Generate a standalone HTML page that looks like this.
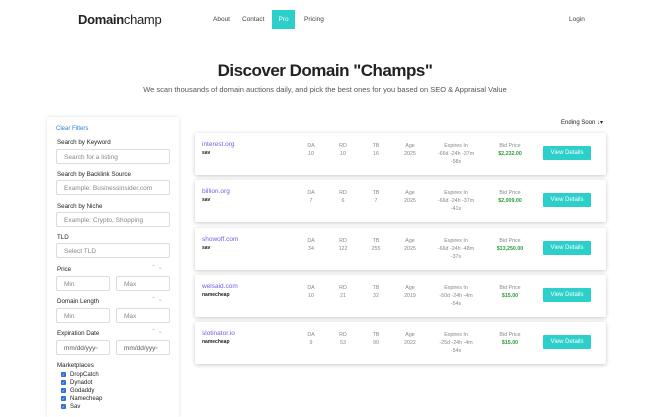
<!DOCTYPE html><html><head><style>
*{box-sizing:border-box;margin:0;padding:0}
body{width:650px;height:414px;overflow:hidden;background:#fff;font-family:"Liberation Sans",sans-serif;color:#222;position:relative}
.a{position:absolute}
.nav{font-size:6.5px;color:#444}
.inp{position:absolute;left:56px;width:114px;height:15px;border:1px solid #dcdcdc;border-radius:2px;font-size:6.5px;color:#888;padding:4px 0 0 7px}
.lbl{position:absolute;left:57px;font-size:6.2px;color:#222}
.half{width:54px}
.card{position:absolute;left:195px;width:411px;height:42px;background:#fff;box-shadow:0 1px 4px rgba(0,0,0,.22);border-radius:2px}
.c{position:absolute;text-align:center;font-size:5.3px;color:#888;line-height:8px}
.btn{position:absolute;left:348px;top:13px;width:48px;height:14px;background:#2ccfc9;color:#fff;font-size:6px;text-align:center;line-height:14px;border-radius:1px}
.cb{font-size:6px;color:#222;position:absolute;left:61px}
.cb:before{content:"✓";display:inline-block;width:5px;height:5px;background:#2f6fd6;color:#fff;font-size:4px;line-height:5px;text-align:center;margin-right:4px;border-radius:1px;vertical-align:middle}
</style></head><body>
<div class="a" style="left:78px;top:12px;font-size:13px;letter-spacing:-0.3px"><b>Domain</b>champ</div>
<div class="a nav" style="left:213px;top:16px">About</div>
<div class="a nav" style="left:242px;top:16px">Contact</div>
<div class="a" style="left:272px;top:10px;width:23px;height:19px;background:#2ccfc9;color:#fff;font-size:6.5px;text-align:center;line-height:19px">Pro</div>
<div class="a nav" style="left:304px;top:16px">Pricing</div>
<div class="a nav" style="left:569px;top:16px">Login</div>
<div class="a" style="left:0;width:650px;top:61px;text-align:center;font-size:17px;font-weight:bold;letter-spacing:-0.5px">Discover Domain "Champs"</div>
<div class="a" style="left:0;width:650px;top:85px;text-align:center;font-size:7.5px;color:#555">We scan thousands of domain auctions daily, and pick the best ones for you based on SEO &amp; Appraisal Value</div>

<div class="a" style="left:47px;top:117px;width:132px;height:300px;box-shadow:0 0 4px rgba(0,0,0,.12);border-radius:2px"></div>
<div class="a" style="left:56px;top:126px;font-size:6px;color:#2f7de0">Clear Filters</div>
<div class="lbl" style="top:139px">Search by Keyword</div><div class="inp" style="top:149px">Search for a listing</div>
<div class="lbl" style="top:171px">Search by Backlink Source</div><div class="inp" style="top:180px">Example: Businessinsider.com</div>
<div class="lbl" style="top:203px">Search by Niche</div><div class="inp" style="top:212px">Example: Crypto, Shopping</div>
<div class="lbl" style="top:234px">TLD</div><div class="inp" style="top:243px">Select TLD</div>
<div class="lbl" style="top:266px">Price</div><div class="a" style="left:151px;top:264px;font-size:6px;color:#bbb">⌃ ⌄</div>
<div class="inp half" style="top:276px">Min</div><div class="inp half" style="top:276px;left:116px">Max</div>
<div class="lbl" style="top:298px">Domain Length</div><div class="a" style="left:151px;top:296px;font-size:6px;color:#bbb">⌃ ⌄</div>
<div class="inp half" style="top:308px">Min</div><div class="inp half" style="top:308px;left:116px">Max</div>
<div class="lbl" style="top:330px">Expiration Date</div><div class="a" style="left:151px;top:328px;font-size:6px;color:#bbb">⌃ ⌄</div>
<div class="inp half" style="top:340px;color:#555">mm/dd/yyy▫</div><div class="inp half" style="top:340px;left:116px;color:#555">mm/dd/yyy▫</div>
<div class="lbl" style="top:362px">Marketplaces</div>
<div class="cb" style="top:372px">DropCatch</div><div class="cb" style="top:380px">Dynadot</div><div class="cb" style="top:388px">Godaddy</div><div class="cb" style="top:396px">Namecheap</div><div class="cb" style="top:404px">Sav</div>

<div class="a" style="left:561px;top:119px;font-size:6px;color:#222">Ending Soon ↓▾</div>

<div class="card" style="top:133px"><div class="a" style="left:7px;top:8px;font-size:6.5px;color:#7a5be8">interest.org</div><div class="a" style="left:7px;top:17px;font-size:5px;font-weight:bold">sav</div>
<div class="c" style="left:106px;top:9px;width:20px">DA<br>10</div><div class="c" style="left:138px;top:9px;width:20px">RD<br>10</div><div class="c" style="left:171px;top:9px;width:20px">TB<br>16</div><div class="c" style="left:203px;top:9px;width:24px">Age<br>2025</div><div class="c" style="left:236px;top:9px;width:50px">Expires In<br>-66d -24h -37m<br>-58s</div><div class="c" style="left:295px;top:9px;width:40px">Bid Price<br><b style="color:#2a9d3a">$2,232.00</b></div><div class="btn">View Details</div></div>
<div class="card" style="top:180px"><div class="a" style="left:7px;top:8px;font-size:6.5px;color:#7a5be8">billion.org</div><div class="a" style="left:7px;top:17px;font-size:5px;font-weight:bold">sav</div>
<div class="c" style="left:106px;top:9px;width:20px">DA<br>7</div><div class="c" style="left:138px;top:9px;width:20px">RD<br>6</div><div class="c" style="left:171px;top:9px;width:20px">TB<br>7</div><div class="c" style="left:203px;top:9px;width:24px">Age<br>2025</div><div class="c" style="left:236px;top:9px;width:50px">Expires In<br>-66d -24h -37m<br>-41s</div><div class="c" style="left:295px;top:9px;width:40px">Bid Price<br><b style="color:#2a9d3a">$2,009.00</b></div><div class="btn">View Details</div></div>
<div class="card" style="top:228px"><div class="a" style="left:7px;top:8px;font-size:6.5px;color:#7a5be8">showoff.com</div><div class="a" style="left:7px;top:17px;font-size:5px;font-weight:bold">sav</div>
<div class="c" style="left:106px;top:9px;width:20px">DA<br>34</div><div class="c" style="left:138px;top:9px;width:20px">RD<br>122</div><div class="c" style="left:171px;top:9px;width:20px">TB<br>255</div><div class="c" style="left:203px;top:9px;width:24px">Age<br>2025</div><div class="c" style="left:236px;top:9px;width:50px">Expires In<br>-66d -24h -48m<br>-37s</div><div class="c" style="left:295px;top:9px;width:40px">Bid Price<br><b style="color:#2a9d3a">$13,250.00</b></div><div class="btn">View Details</div></div>
<div class="card" style="top:275px"><div class="a" style="left:7px;top:8px;font-size:6.5px;color:#7a5be8">welsaid.com</div><div class="a" style="left:7px;top:17px;font-size:5px;font-weight:bold">namecheap</div>
<div class="c" style="left:106px;top:9px;width:20px">DA<br>10</div><div class="c" style="left:138px;top:9px;width:20px">RD<br>21</div><div class="c" style="left:171px;top:9px;width:20px">TB<br>32</div><div class="c" style="left:203px;top:9px;width:24px">Age<br>2019</div><div class="c" style="left:236px;top:9px;width:50px">Expires In<br>-50d -24h -4m<br>-54s</div><div class="c" style="left:295px;top:9px;width:40px">Bid Price<br><b style="color:#2a9d3a">$15.00</b></div><div class="btn">View Details</div></div>
<div class="card" style="top:322px"><div class="a" style="left:7px;top:8px;font-size:6.5px;color:#7a5be8">slotinator.io</div><div class="a" style="left:7px;top:17px;font-size:5px;font-weight:bold">namecheap</div>
<div class="c" style="left:106px;top:9px;width:20px">DA<br>9</div><div class="c" style="left:138px;top:9px;width:20px">RD<br>53</div><div class="c" style="left:171px;top:9px;width:20px">TB<br>90</div><div class="c" style="left:203px;top:9px;width:24px">Age<br>2022</div><div class="c" style="left:236px;top:9px;width:50px">Expires In<br>-25d -24h -4m<br>-54s</div><div class="c" style="left:295px;top:9px;width:40px">Bid Price<br><b style="color:#2a9d3a">$15.00</b></div><div class="btn">View Details</div></div>
</body></html>
